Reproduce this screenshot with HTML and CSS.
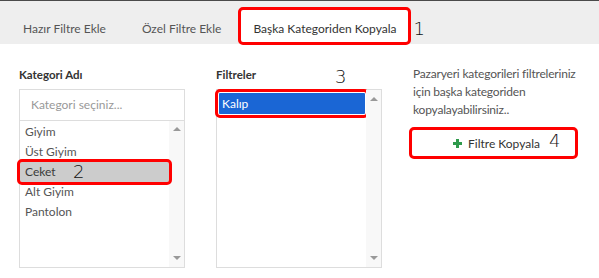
FILE: index.html
```html
<!DOCTYPE html>
<html lang="tr">
<head>
<meta charset="utf-8">
<title>Filtre Kopyala</title>
<link rel="stylesheet" href="styles.css">
</head>
<body>
<div class="topline"></div>
<nav class="tabs">
  <div class="tab">Hazır Filtre Ekle</div>
  <div class="tab">Özel Filtre Ekle</div>
  <div class="tab active">Başka Kategoriden Kopyala<span class="num n1">1</span></div>
</nav>
<main class="content">
  <section class="col">
    <div class="label">Kategori Adı</div>
    <div class="select">
      <div class="search">Kategori seçiniz...</div>
      <div class="listwrap">
        <ul class="list">
          <li>Giyim</li>
          <li>Üst Giyim</li>
          <li class="picked">Ceket<span class="num n2">2</span></li>
          <li>Alt Giyim</li>
          <li>Pantolon</li>
        </ul>
        <div class="scroll"><span class="arrow up"></span><span class="arrow down"></span></div>
      </div>
    </div>
  </section>
  <section class="col">
    <div class="label">Filtreler</div>
    <span class="num n3">3</span>
    <div class="select">
      <div class="listwrap">
        <ul class="list mid">
          <li class="active-opt">Kalıp</li>
        </ul>
        <div class="scroll mid-scroll"><span class="arrow up"></span><span class="arrow down"></span></div>
      </div>
    </div>
  </section>
  <section class="col info">
    <p class="desc">Pazaryeri kategorileri filtreleriniz<br>için başka kategoriden<br>kopyalayabilirsiniz..</p>
    <button class="copy-btn" type="button">
      <svg class="plus" width="9" height="9" viewBox="0 0 9 9"><rect x="3" y="0" width="3" height="9" fill="#2f9a4c"/><rect x="0" y="3" width="9" height="3" fill="#2f9a4c"/></svg>
      <span>Filtre Kopyala</span>
      <span class="num n4">4</span>
    </button>
  </section>
</main>
</body>
</html>
```

FILE: styles.css
```css
* { box-sizing: border-box; }

body {
  margin: 0;
  width: 599px;
  height: 278px;
  overflow: hidden;
  background: #fff;
  font-family: Lato, "Open Sans", "Liberation Sans", sans-serif;
  font-size: 12px;
  color: #555;
}

.topline {
  height: 1px;
  background: #4a4a4a;
}

.tabs {
  display: flex;
  height: 43px;
  background: #eee;
  padding: 9px 0 0 9px;
  gap: 8px;
}

.tab {
  height: 32px;
  padding: 9px 14px 0;
  line-height: 20px;
  white-space: nowrap;
  color: #555;
}

.tab.active {
  position: relative;
  margin-left: -2px;
  padding: 9px 12px 0;
  background: #fff;
  color: #333;
  outline: 3px solid #f00;
  border-radius: 2px;
}

.num {
  position: absolute;
  font-family: "DejaVu Sans", sans-serif;
  font-weight: 200;
  font-size: 18px;
  line-height: 18px;
  color: #111;
}

.n1 { left: calc(100% + 5px); top: 10px; }
.n2 { left: 53px; top: 1px; }
.n3 { left: 119px; top: 1px; }
.n4 { left: 137px; top: 2px; }

.content {
  display: flex;
  padding: 23px 0 0 19px;
}

.col {
  position: relative;
  width: 166px;
}

.col + .col { margin-left: 31px; }

.label {
  height: 16px;
  line-height: 16px;
  margin-bottom: 6px;
  font-size: 11.5px;
  font-weight: 700;
  color: #333;
}

.select {
  display: flex;
  flex-direction: column;
  height: 179px;
  border: 1px solid #ddd;
}

.search {
  height: 31px;
  line-height: 30px;
  padding-left: 11px;
  border-bottom: 1px solid #ddd;
  color: #999;
}

.listwrap {
  flex: 1;
  display: flex;
}

.list {
  flex: 1;
  list-style: none;
  margin: 0;
  padding: 1px 0 0;
}

.list li {
  height: 20px;
  line-height: 20px;
  padding-left: 5px;
  color: #555;
}

.list li.picked {
  position: relative;
  background: #ccc;
  color: #3a3a3a;
  outline: 3px solid #f00;
  border-radius: 2px;
}

.list.mid { padding: 3px 1px 0 2px; }

.list li.active-opt {
  height: 21px;
  line-height: 21px;
  padding-left: 3px;
  background: #1a66d5;
  color: #fff;
  outline: 3px solid #f00;
  outline-offset: 1px;
  border-radius: 1px;
}

.scroll {
  width: 15px;
  background: #f8f8f8;
  display: flex;
  flex-direction: column;
  justify-content: space-between;
  align-items: center;
  padding: 6px 0 7px;
}

.mid-scroll { padding: 7px 0 7px; }

.arrow {
  width: 0;
  height: 0;
  border-left: 4.5px solid transparent;
  border-right: 4.5px solid transparent;
}

.arrow.up { border-bottom: 4px solid #999; }
.arrow.down { border-top: 4px solid #999; }

.info { width: 170px; }

.desc {
  margin: -2px 0 0;
  line-height: 18px;
  letter-spacing: -0.2px;
  white-space: nowrap;
  color: #555;
}

.copy-btn {
  position: relative;
  display: flex;
  align-items: center;
  justify-content: center;
  gap: 6px;
  width: 163px;
  height: 26px;
  margin: 11px 0 0 -1px;
  padding: 0 0 0 6px;
  background: #fff;
  border: none;
  outline: 3px solid #f00;
  border-radius: 2px;
  font: inherit;
  color: #333;
}

.plus { display: block; }
```
